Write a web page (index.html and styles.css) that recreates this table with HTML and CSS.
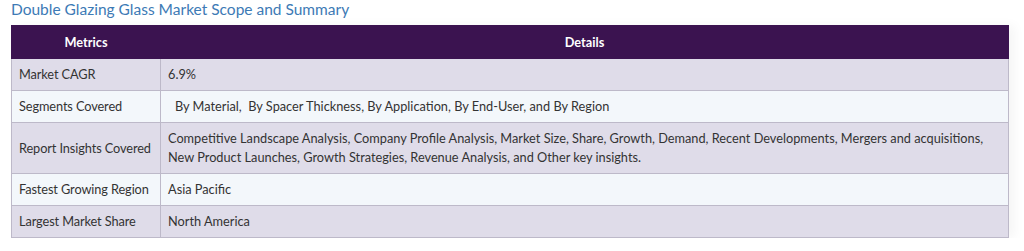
FILE: index.html
```html
<!DOCTYPE html>
<html lang="en">
<head>
<meta charset="utf-8">
<title>Double Glazing Glass Market Scope and Summary</title>
<link rel="stylesheet" href="styles.css">
</head>
<body>
<div class="wrap">
  <h2 class="title">Double Glazing Glass Market Scope and Summary</h2>
  <table class="summary">
    <colgroup><col class="col1"><col class="col2"></colgroup>
    <thead>
      <tr><th class="c1">Metrics</th><th class="c2">Details</th></tr>
    </thead>
    <tbody>
      <tr class="odd"><td class="label">Market CAGR</td><td>6.9%</td></tr>
      <tr class="even"><td class="label">Segments Covered</td><td class="indent">By Material,&nbsp; By Spacer Thickness, By Application, By End-User, and By Region</td></tr>
      <tr class="odd"><td class="label">Report Insights Covered</td><td>Competitive Landscape Analysis, Company Profile Analysis, Market Size, Share, Growth, Demand, Recent Developments, Mergers and acquisitions, New Product Launches, Growth Strategies, Revenue Analysis, and Other key insights.</td></tr>
      <tr class="even"><td class="label">Fastest Growing Region</td><td>Asia Pacific</td></tr>
      <tr class="odd"><td class="label">Largest Market Share</td><td>North America</td></tr>
    </tbody>
  </table>
</div>
</body>
</html>
```
FILE: styles.css
```css
html, body {
  margin: 0;
  padding: 0;
  background: #ffffff;
}
body {
  font-family: Lato, "Open Sans", sans-serif;
  color: #333333;
}
.wrap {
  padding: 0 16px 0 11px;
}
.title {
  margin: 0;
  height: 25px;
  font-size: 15.5px;
  line-height: 18px;
  font-weight: 400;
  color: #3d7ab5;
}
.summary {
  width: 998px;
  table-layout: fixed;
  border-collapse: collapse;
  font-size: 12.75px;
  line-height: 19px;
  box-shadow: 6px 0 10px rgba(0,0,0,0.04);
}
.col1 { width: 149px; }
.summary th {
  background: #3b1350;
  color: #ffffff;
  font-weight: 700;
  height: 32px;
  padding: 0;
  border: 1px solid #3b1350;
  border-left-color: #6a4a80;
}
.summary th.c1 {
  border-left-color: #3b1350;
}
.summary td {
  border: 1px solid #bdb9c9;
  padding: 6px 7px;
  height: 19px;
  color: #333333;
}
.summary td.label {
  white-space: nowrap;
  letter-spacing: -0.1px;
}
.summary tr.odd td { background: #dfdce9; }
.summary tr.even td { background: #f3f7fb; }
.summary td.indent { padding-left: 14px; }
```
